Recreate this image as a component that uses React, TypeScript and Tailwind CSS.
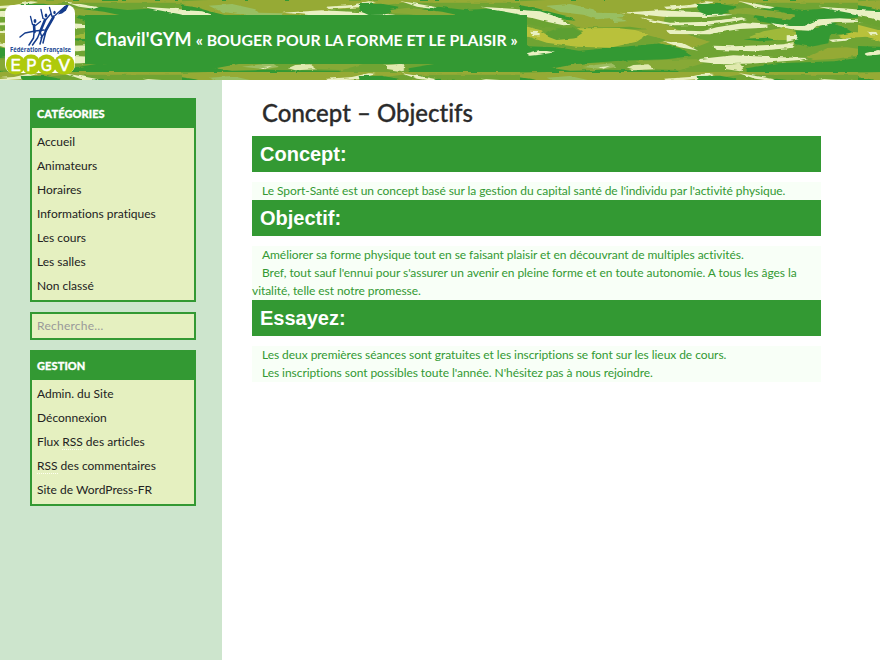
import React from "react";

const categories = ["Accueil", "Animateurs", "Horaires", "Informations pratiques", "Les cours", "Les salles", "Non classé"];

// Paint order matters: later strokes cover earlier ones.
const strokes: [string, string][] = [
  ["#96aa35", "80,0 1014,0 1014,8 660,8 570,20 440,30 430,70 520,110 570,125 520,145 380,140 440,120 300,85 170,80 120,50 40,28 0,18 0,4"],
  ["#339933", "0,16 40,22 100,38 140,48 170,62 140,60 70,40 0,30"],
  ["#6aa331", "0,48 60,62 130,80 200,84 330,80 380,88 300,90 180,88 60,80 0,66"],
  ["#98bf62", "80,17 150,12 220,28 230,38 300,40 320,50 230,58 190,44 120,36"],
  ["#98bf62", "270,52 310,56 320,64 280,66"],
  ["#b9c13b", "0,74 60,90 100,115 160,115 190,95 170,85 290,84 345,90 385,103 350,125 270,143 170,140 80,128 30,112 0,100"],
  ["#5c9f32", "80,98 110,85 160,84 188,98 165,115 110,120 84,110"],
  ["#e9f0c2", "0,30 60,34 110,50 152,74 130,76 80,65 40,55 0,48"],
  ["#e9f0c2", "30,95 55,96 60,106 38,106"],
  ["#e9f0c2", "300,38 420,31 570,38 640,44 570,51 430,50 350,42"],
  ["#e9f0c2", "360,52 450,68 540,66 640,56 660,61 560,75 460,76 400,66"],
  ["#e9f0c2", "435,90 500,92 600,95 570,103 450,102"],
  ["#e9f0c2", "432,20 510,15 560,4 582,6 530,22 440,27"],
  ["#339933", "0,138 110,142 180,152 270,144 420,130 480,145 515,168 440,178 300,182 200,190 110,205 0,216"],
  ["#339933", "0,203 130,205 280,210 470,212 480,217 0,217"],
  ["#e9f0c2", "428,124 490,130 535,152 480,142"],
  ["#e9f0c2", "20,160 60,150 105,157 60,164 30,167"],
  ["#88a936", "100,205 170,192 250,188 290,203 220,211 150,212"],
  ["#9bbd60", "180,200 230,194 275,190 290,200 250,208"],
  ["#e9f0c2", "235,202 270,198 250,206"],
  ["#87a936", "350,184 440,179 530,178 550,190 480,210 400,206"],
  ["#e0e9ae", "318,205 340,195 385,193 405,208 340,211"],
  ["#339933", "530,12 600,11 650,20 640,32 605,44 560,45 535,34"],
  ["#339933", "700,52 720,28 770,20 850,30 940,25 1010,36 1020,52 920,62 860,85 800,80 720,64"],
  ["#8aa936", "625,30 680,23 780,35 826,45 810,59 740,50 680,42 630,40"],
  ["#e9f0c2", "655,3 710,12 764,22 750,26 705,20"],
  ["#e9f0c2", "540,68 610,59 665,52 680,58 600,68 540,76"],
  ["#e9f0c2", "590,82 670,69 752,74 735,83 660,87 580,100 540,102 540,96"],
  ["#9fb93a", "680,114 730,94 790,83 825,92 825,120 770,120 730,113"],
  ["#339933", "825,92 870,90 930,67 970,80 1000,98 930,106 925,130 870,140 825,132"],
  ["#e9f0c2", "752,68 810,78 850,78 896,58 960,55 1030,60 1060,67 950,68 890,78 870,92 830,90 780,82"],
  ["#e9f0c2", "800,106 828,104 835,118 800,125"],
  ["#d2dc8d", "793,132 820,126 823,140 798,146"],
  ["#339933", "670,118 740,113 770,120 720,124"],
  ["#b9c13b", "955,107 1000,96 1070,102 1040,110 970,114"],
  ["#e9f0c2", "926,119 995,114 975,122 938,126"],
  ["#e9f0c2", "580,137 640,139 750,135 820,131 820,143 700,154 590,150"],
  ["#e9f0c2", "538,177 640,166 740,170 865,174 840,180 710,190 610,193 540,186"],
  ["#e0e9ae", "615,195 660,191 670,205 660,214 615,207"],
  ["#95aa35", "860,171 920,144 980,142 1050,150 1030,165 940,177 880,180"],
  ["#e9f0c2", "1035,162 1070,151 1105,153 1070,166"],
  ["#339933", "680,205 770,190 940,184 1040,170 1080,217 680,217"],
  ["#e9f0c2", "895,20 1000,27 1060,34 1100,46 1060,54 1005,42 940,30"],
];

function Banner() {
  return (
    <svg className="absolute inset-0 h-20 w-full" viewBox="0 0 880 80" preserveAspectRatio="none" aria-hidden="true">
      <defs>
        <pattern id="grass" width="1014" height="216" patternUnits="userSpaceOnUse" patternTransform="translate(520 0) scale(.33333)">
          <rect width="1014" height="216" fill="#70a433" />
          {[-1014, 0, 1014].map((x) => (
            <g key={x} transform={`translate(${x} 0)`}>
              {strokes.map(([fill, points], i) => <polygon key={i} fill={fill} points={points} />)}
            </g>
          ))}
        </pattern>
        <filter id="ragged" x="0" y="0" width="100%" height="100%" colorInterpolationFilters="sRGB">
          <feTurbulence type="fractalNoise" baseFrequency=".1 .4" numOctaves="2" seed="8" />
          <feDisplacementMap in="SourceGraphic" scale="3" xChannelSelector="R" yChannelSelector="G" />
        </filter>
      </defs>
      <rect x="-20" y="-20" width="920" height="120" fill="url(#grass)" filter="url(#ragged)" />
    </svg>
  );
}

function Logo() {
  return (
    <svg className="relative block h-[70px] w-[70px] shrink-0" viewBox="5 5 70 70" role="img" aria-label="Fédération Française EPGV">
      <rect x="5" y="5" width="70" height="68" rx="8" fill="#fff" />
      <g fill="none" stroke="#143c8c" strokeLinecap="round" strokeLinejoin="round">
        <path strokeWidth="1.3" d="M30.5 16.5l2 8 3 1 5-4M41 9.5l2 9 3 1 5-6M49.5 7.5l2.5 9 3-1 10-9" />
        <path strokeWidth="2.6" d="M34 25l.5 7M45 20l-5 12M53.500 17l-8 14" />
        <path strokeWidth="1.5" d="M20 37l5-4 10-2 9-1M34 33l-.5 5-4.500 7M40 32l-2.500 6-5 7M40 32l2 5-2 7M46 31l-5 7M46 31l-3 12" />
      </g>
      <path d="M61 10l5-5 3-.5-3 6-4 3-4 1z" fill="#143c8c" />
      <g fill="#143c8c">
        <ellipse cx="35" cy="21" rx="1.400" ry="2" />
        <ellipse cx="46" cy="15.500" rx="1.300" ry="2" />
        <ellipse cx="54.500" cy="12.500" rx="1.200" ry="1.800" />
      </g>
      <text x="10" y="52" textLength="61" lengthAdjust="spacingAndGlyphs" fontFamily="'Open Sans', sans-serif" fontSize="7" fontWeight="700" fill="#234a94">Fédération Française</text>
      <g fill="#afca0b">
        <rect x="6" y="54.500" width="19" height="20" rx="9" />
        <rect x="22" y="54.500" width="18" height="20" rx="8.500" />
        <rect x="37" y="54.500" width="19" height="20" rx="9" />
        <rect x="54" y="54.500" width="20.500" height="20" rx="9.500" />
        <rect x="19" y="61" width="41" height="7" />
      </g>
      <g fontFamily="'Liberation Sans', sans-serif" fontSize="17" fill="#fff" stroke="#fff" strokeWidth=".6" textAnchor="middle">
        <text x="15.800" y="70.500" textLength="10" lengthAdjust="spacingAndGlyphs">E</text>
        <text x="31.500" y="70.500" textLength="10" lengthAdjust="spacingAndGlyphs">P</text>
        <text x="46.500" y="70.500" textLength="11" lengthAdjust="spacingAndGlyphs">G</text>
        <text x="64.300" y="70.500" textLength="11.500" lengthAdjust="spacingAndGlyphs">V</text>
      </g>
    </svg>
  );
}

function Widget({ title, children }: { title: string; children: React.ReactNode }) {
  return (
    <section className="border-2 border-[#339933] bg-[#e5f0c0]">
      <h2 className="h-7 bg-[#339933] px-[5px] text-[11px] leading-7 font-black tracking-[0.1px] text-white [-webkit-text-stroke:0.3px_white]">{title}</h2>
      <ul className="px-[5px] pt-[2px] pb-[2px] text-[12px] leading-6 text-[#222]">{children}</ul>
    </section>
  );
}

function Section({ title, lines }: { title: string; lines: string[] }) {
  return (
    <section>
      <h2 className="mb-2.5 h-9 bg-[#339933] px-2 font-['Liberation_Sans',sans-serif] text-[20px] leading-9 font-bold text-white">{title}</h2>
      <div className="bg-[#f8fff7] text-[12px] leading-[18px] tracking-[-0.055px] text-[#339933]">
        {lines.map((line) => <p key={line} className="indent-[10px]">{line}</p>)}
      </div>
    </section>
  );
}

function Rss() {
  return <abbr className="border-b border-dotted border-[#fffff0] no-underline">RSS</abbr>;
}

export default function App() {
  return (
    <div className="flex h-[660px] w-[880px] flex-col overflow-hidden bg-white font-['Lato',sans-serif] [font-variant-ligatures:none]">
      <header className="relative flex h-20 shrink-0 items-start overflow-hidden pl-[5px]">
        <Banner />
        <div className="relative mt-[5px]"><Logo /></div>
        <h1 className="relative mt-[15px] ml-[10px] h-[49px] w-[442px] bg-[#339933] pl-[10px] leading-[49px] font-bold whitespace-nowrap text-white">
          <span className="text-[18px] tracking-[0.2px]">Chavil'GYM</span> <span className="text-[15.8px]">« BOUGER POUR LA FORME ET LE PLAISIR »</span>
        </h1>
      </header>
      <div className="flex flex-1">
        <aside className="flex w-[222px] flex-col gap-2.5 bg-[#cde5cd] pt-[18px] pr-[26px] pl-[30px]">
          <Widget title="CATÉGORIES">
            {categories.map((name) => <li key={name}>{name}</li>)}
          </Widget>
          <input className="block h-7 w-full border-2 border-[#339933] bg-[#e5f0c0] px-[5px] pb-[2px] text-[12px] tracking-[0.25px] placeholder:text-[#999]" placeholder="Recherche…" aria-label="Recherche" />
          <Widget title="GESTION">
            <li>Admin. du Site</li>
            <li>Déconnexion</li>
            <li>Flux <Rss /> des articles</li>
            <li><Rss /> des commentaires</li>
            <li>Site de WordPress-FR</li>
          </Widget>
        </aside>
        <main className="w-[599px] pt-[18px] pl-[30px]">
          <h1 className="h-[38px] pl-[10px] text-[24px] leading-[30px] font-medium text-[#2b2b2b] [-webkit-text-stroke:0.3px_#2b2b2b]">Concept – Objectifs</h1>
          <Section title="Concept:" lines={["Le Sport-Santé est un concept basé sur la gestion du capital santé de l'individu par l'activité physique."]} />
          <Section title="Objectif:" lines={[
            "Améliorer sa forme physique tout en se faisant plaisir et en découvrant de multiples activités.",
            "Bref, tout sauf l'ennui pour s'assurer un avenir en pleine forme et en toute autonomie. A tous les âges la vitalité, telle est notre promesse.",
          ]} />
          <Section title="Essayez:" lines={[
            "Les deux premières séances sont gratuites et les inscriptions se font sur les lieux de cours.",
            "Les inscriptions sont possibles toute l'année. N'hésitez pas à nous rejoindre.",
          ]} />
        </main>
      </div>
    </div>
  );
}
